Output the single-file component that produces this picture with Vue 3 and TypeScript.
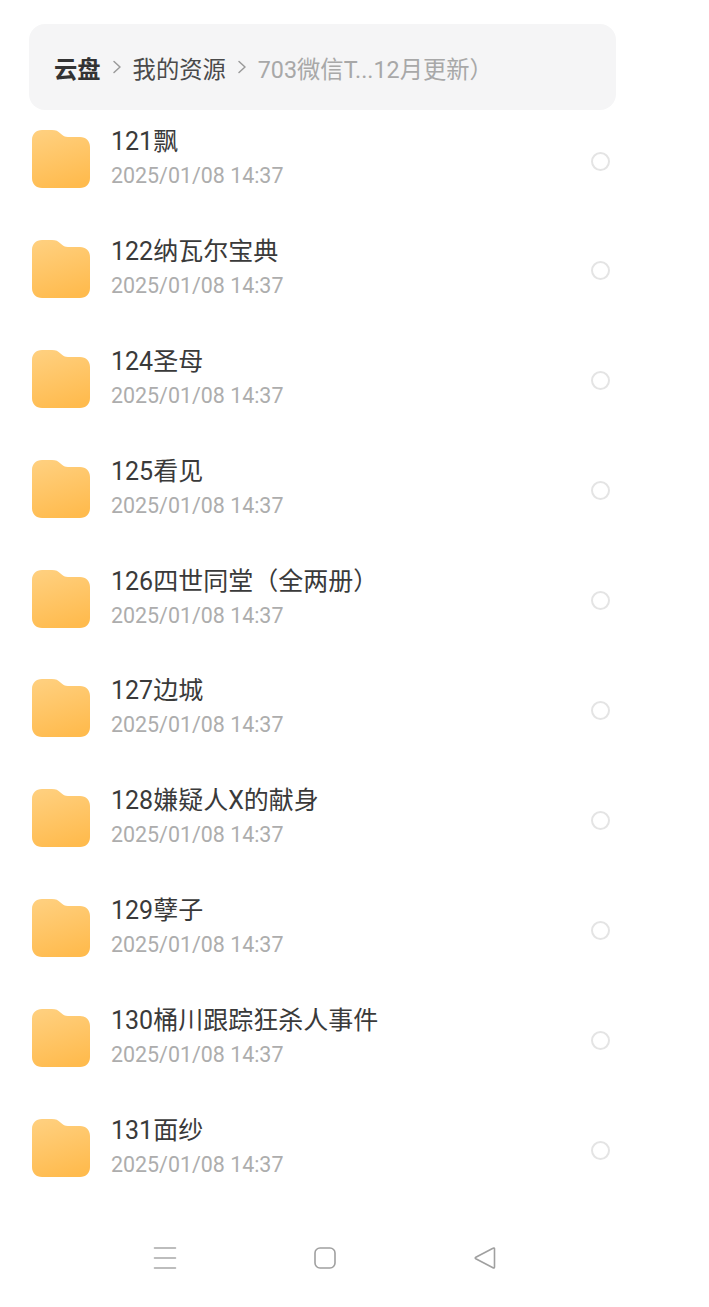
<script setup lang="ts">
interface Folder {
  name: string
}

const folders: Folder[] = [
  { name: '121飘' },
  { name: '122纳瓦尔宝典' },
  { name: '124圣母' },
  { name: '125看见' },
  { name: '126四世同堂（全两册）' },
  { name: '127边城' },
  { name: '128嫌疑人X的献身' },
  { name: '129孽子' },
  { name: '130桶川跟踪狂杀人事件' },
  { name: '131面纱' },
]
</script>

<template>
  <div class="page">
    <div class="crumbs">
      <span class="crumb-root">云盘</span>
      <svg class="chevron" viewBox="0 0 10 14" width="10" height="14">
        <path d="M2 1.5 L8 7 L2 12.5" fill="none" stroke="#9a9a9a" stroke-width="1.5" stroke-linecap="round" stroke-linejoin="round" />
      </svg>
      <span class="crumb-mid">我的资源</span>
      <svg class="chevron" viewBox="0 0 10 14" width="10" height="14">
        <path d="M2 1.5 L8 7 L2 12.5" fill="none" stroke="#9a9a9a" stroke-width="1.5" stroke-linecap="round" stroke-linejoin="round" />
      </svg>
      <span class="crumb-last">703微信T...12月更新）</span>
    </div>

    <div class="file-list">
      <div v-for="item in folders" :key="item.name" class="file-row">
        <svg class="folder" viewBox="0 0 58 58" width="58" height="58">
          <defs>
            <linearGradient :id="`fold-${item.name}`" x1="0.3" y1="0" x2="0.6" y2="1">
              <stop offset="0" stop-color="#ffcf7d" />
              <stop offset="1" stop-color="#ffbb4e" />
            </linearGradient>
          </defs>
          <path
            d="M10 0 H20 C24 0 26 1 28.5 3.5 C31 6 33 7 36 7 H48 C54 7 58 11 58 17 V48 C58 54 54 58 48 58 H10 C4 58 0 54 0 48 V10 C0 4 4 0 10 0 Z"
            :fill="`url(#fold-${item.name})`"
          />
        </svg>
        <div class="file-info">
          <div class="file-name">{{ item.name }}</div>
          <div class="file-date">2025/01/08 14:37</div>
        </div>
        <span class="radio"></span>
      </div>
    </div>

    <div class="nav-bar">
      <svg viewBox="0 0 24 24" width="24" height="24">
        <path d="M1.5 2 H22.5 M1.5 12 H22.5 M1.5 22 H22.5" fill="none" stroke="#a8a8a8" stroke-width="1.6" stroke-linecap="round" />
      </svg>
      <svg viewBox="0 0 24 24" width="24" height="24">
        <rect x="2" y="2" width="20" height="20" rx="5" fill="none" stroke="#a0a0a0" stroke-width="1.6" />
      </svg>
      <svg viewBox="0 0 24 24" width="24" height="24">
        <path d="M21.5 2.5 V21 C21.5 22 20.8 22.3 20 21.8 L2.8 12.8 C2 12.3 2 11.7 2.8 11.2 L20 2.2 C20.8 1.7 21.5 2 21.5 2.5 Z" fill="none" stroke="#a0a0a0" stroke-width="1.6" stroke-linejoin="round" />
      </svg>
    </div>
  </div>
</template>

<style scoped>
.page {
  width: 709px;
  height: 1307px;
  background: #fff;
  box-sizing: border-box;
  padding-top: 24px;
  overflow: hidden;
  font-family: "Roboto", "Noto Sans CJK SC", sans-serif;
}

.crumbs {
  display: flex;
  align-items: center;
  width: 587px;
  height: 86px;
  margin-left: 29px;
  padding-left: 25px;
  padding-top: 2px;
  box-sizing: border-box;
  background: #f5f5f6;
  border-radius: 16px;
  font-size: 23.3px;
  white-space: nowrap;
}

.crumb-root {
  font-weight: 700;
  color: #333;
}

.chevron {
  margin: -3px 11px 0 11px;
}

.crumb-mid {
  color: #4a4a4a;
}

.crumb-last {
  color: #a8a8a8;
}

.file-list {
  display: flex;
  flex-direction: column;
  gap: 51.9px;
  margin-top: 20px;
  padding: 0 99px 0 32px;
}

.file-row {
  display: flex;
  align-items: center;
  height: 58px;
}

.folder {
  flex: none;
}

.file-info {
  flex: 1;
  margin-left: 21px;
  margin-top: 0;
}

.file-name {
  font-size: 25px;
  line-height: 34px;
  color: #3a3a3a;
}

.file-date {
  font-size: 21.4px;
  line-height: 34px;
  color: #adadad;
}

.radio {
  flex: none;
  width: 19px;
  height: 19px;
  box-sizing: border-box;
  margin-top: 4px;
  border: 2px solid #e4e4e4;
  border-radius: 50%;
}

.nav-bar {
  display: flex;
  gap: 136px;
  margin-top: 69px;
  padding-left: 153px;
}
</style>

<style>
html,
body {
  background: #fff;
}
</style>
